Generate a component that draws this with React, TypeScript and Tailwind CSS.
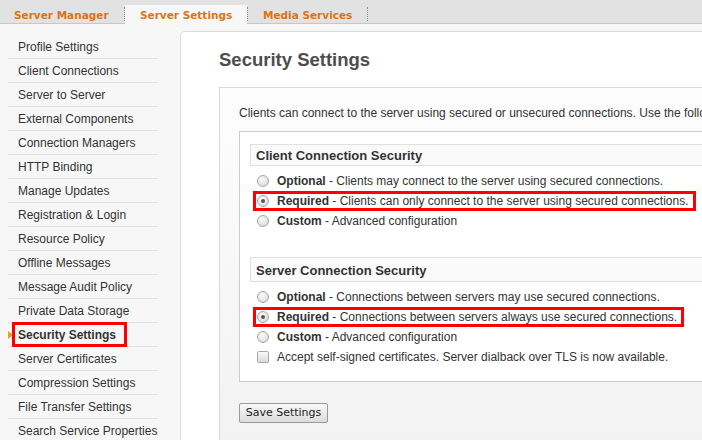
import React from 'react';

const TABS = [
  { label: 'Server Manager', width: 'w-[124px]', pad: 'pl-[14px]', active: false },
  { label: 'Server Settings', width: 'w-[122px]', pad: 'pl-[15px]', active: true },
  { label: 'Media Services', width: 'w-[119px]', pad: 'pl-[15px]', active: false },
];

const MENU = [
  'Profile Settings',
  'Client Connections',
  'Server to Server',
  'External Components',
  'Connection Managers',
  'HTTP Binding',
  'Manage Updates',
  'Registration & Login',
  'Resource Policy',
  'Offline Messages',
  'Message Audit Policy',
  'Private Data Storage',
  'Security Settings',
  'Server Certificates',
  'Compression Settings',
  'File Transfer Settings',
  'Search Service Properties',
];

interface Choice {
  title: string;
  text: string;
  checked?: boolean;
  marked?: boolean;
}

const CLIENT_CHOICES: Choice[] = [
  { title: 'Optional', text: 'Clients may connect to the server using secured connections.' },
  { title: 'Required', text: 'Clients can only connect to the server using secured connections.', checked: true, marked: true },
  { title: 'Custom', text: 'Advanced configuration' },
];

const SERVER_CHOICES: Choice[] = [
  { title: 'Optional', text: 'Connections between servers may use secured connections.' },
  { title: 'Required', text: 'Connections between servers always use secured connections.', checked: true, marked: true },
  { title: 'Custom', text: 'Advanced configuration' },
];

function Radio({ checked }: { checked?: boolean }) {
  return (
    <span className="flex h-[12px] w-[12px] shrink-0 items-center justify-center rounded-full border border-[#a8a8a8] bg-[radial-gradient(circle_at_40%_35%,#fafafa,#d4d4d4)]">
      {checked && <span className="h-[4px] w-[4px] rounded-full bg-[#555]" />}
    </span>
  );
}

function ChoiceRow({ choice }: { choice: Choice }) {
  return (
    <div
      className={`ml-[3px] flex h-[20px] w-fit items-center gap-[8px] border-[3px] pl-[1px] pr-[4px] text-[12px] leading-[14px] text-[#333] ${
        choice.marked ? 'border-[#ff0000]' : 'border-transparent'
      }`}
    >
      <Radio checked={choice.checked} />
      <span className="whitespace-nowrap">
        <b>{choice.title}</b> - {choice.text}
      </span>
    </div>
  );
}

function SectionHeader({ children, tall }: { children: React.ReactNode; tall?: boolean }) {
  return (
    <div
      className={`flex items-center border border-[#e0e0e0] bg-[#fafafa] pl-[5px] text-[13px] font-bold text-[#333] ${
        tall ? 'h-[25px] pt-[2px]' : 'h-[22px] pt-[1px]'
      }`}
    >
      {children}
    </div>
  );
}

export default function App() {
  return (
    <div className="relative h-[440px] w-[702px] overflow-hidden bg-white font-['Liberation_Sans',Arial,sans-serif]">
      {/* Tab bar */}
      <div className="flex h-[24px] items-end bg-[#e2e2e2]">
        {TABS.map((tab) => (
          <React.Fragment key={tab.label}>
            <div
              className={`flex h-[19px] items-center pt-[3px] ${tab.width} ${tab.pad} font-['DejaVu_Sans',Verdana,sans-serif] text-[10.5px] font-bold text-[#dc7414] ${
                tab.active ? 'bg-[#f7f7f7]' : 'border-b border-[#c8c8c8]'
              }`}
            >
              {tab.label}
            </div>
            <div className="flex h-[19px] w-px items-center border-b border-[#c8c8c8]">
              <span className="h-[14px] border-l border-dotted border-[#8c8c8c]" />
            </div>
          </React.Fragment>
        ))}
        <div className="h-[19px] flex-1 border-b border-[#c8c8c8]" />
      </div>

      <div className="flex h-[416px]">
        {/* Sidebar */}
        <div className="w-[180px] shrink-0 bg-[#f7f7f7] pl-[8px] pt-[11px]">
          {MENU.map((item) => {
            const selected = item === 'Security Settings';
            return (
              <div
                key={item}
                className={`relative flex h-[24px] w-[150px] items-center border-b border-[#e2e2e2] pl-[10px] text-[12px] text-[#333] ${
                  selected ? 'font-bold' : ''
                }`}
              >
                {selected && (
                  <>
                    <span className="absolute left-0 top-[8px] h-0 w-0 border-y-[4px] border-l-[5px] border-y-transparent border-l-[#e5a11c]" />
                    <span className="absolute left-[4px] top-[-1px] h-[25px] w-[115px] border-[3px] border-[#ff0000]" />
                  </>
                )}
                <span className="whitespace-nowrap">{item}</span>
              </div>
            );
          })}
        </div>

        {/* Main */}
        <div className="flex-1 bg-[#f7f7f7] pt-[7px]">
          <div className="h-full rounded-tl-[5px] border-l border-t border-[#dcdcdc] bg-white pl-[38px] pt-[17px]">
            <h1 className="text-[18.5px] font-bold leading-[22px] text-[#4d4d4d]">Security Settings</h1>

            <div className="mt-[16px] w-[600px] border border-[#d9d9d9] bg-gradient-to-b from-[#fdfdfd] to-[#f2f2f2] pb-[17px] pl-[19px] pt-[17px]">
              <p className="whitespace-nowrap text-[12px] leading-[16px] text-[#333]">
                Clients can connect to the server using secured or unsecured connections. Use the following settings to configure connection security.
              </p>

              <div className="mt-[10px] border border-[#cccccc] bg-white pb-[14px] pl-[10px] pt-[12px]">
                <SectionHeader>Client Connection Security</SectionHeader>
                <div className="mt-[5px] flex flex-col">
                  {CLIENT_CHOICES.map((c) => (
                    <ChoiceRow key={c.title} choice={c} />
                  ))}
                </div>

                <div className="mt-[26px]">
                  <SectionHeader tall>Server Connection Security</SectionHeader>
                </div>
                <div className="mt-[5px] flex flex-col">
                  {SERVER_CHOICES.map((c) => (
                    <ChoiceRow key={c.title} choice={c} />
                  ))}
                  <div className="ml-[3px] flex h-[20px] w-fit items-center gap-[8px] border-[3px] border-transparent pl-[1px] text-[12px] leading-[14px] text-[#333]">
                    <span className="h-[12px] w-[12px] shrink-0 rounded-[2px] border border-[#a8a8a8] bg-gradient-to-b from-[#fafafa] to-[#d8d8d8]" />
                    <span className="whitespace-nowrap">
                      Accept self-signed certificates. Server dialback over TLS is now available.
                    </span>
                  </div>
                </div>
              </div>

              <button className="mt-[21px] flex h-[20px] w-[89px] items-center justify-center rounded-[2px] border border-[#9a9a9a] bg-gradient-to-b from-[#f8f8f8] to-[#dcdcdc] font-['DejaVu_Sans',Verdana,sans-serif] text-[11px] text-[#222]">
                Save Settings
              </button>
            </div>
          </div>
        </div>
      </div>
    </div>
  );
}
